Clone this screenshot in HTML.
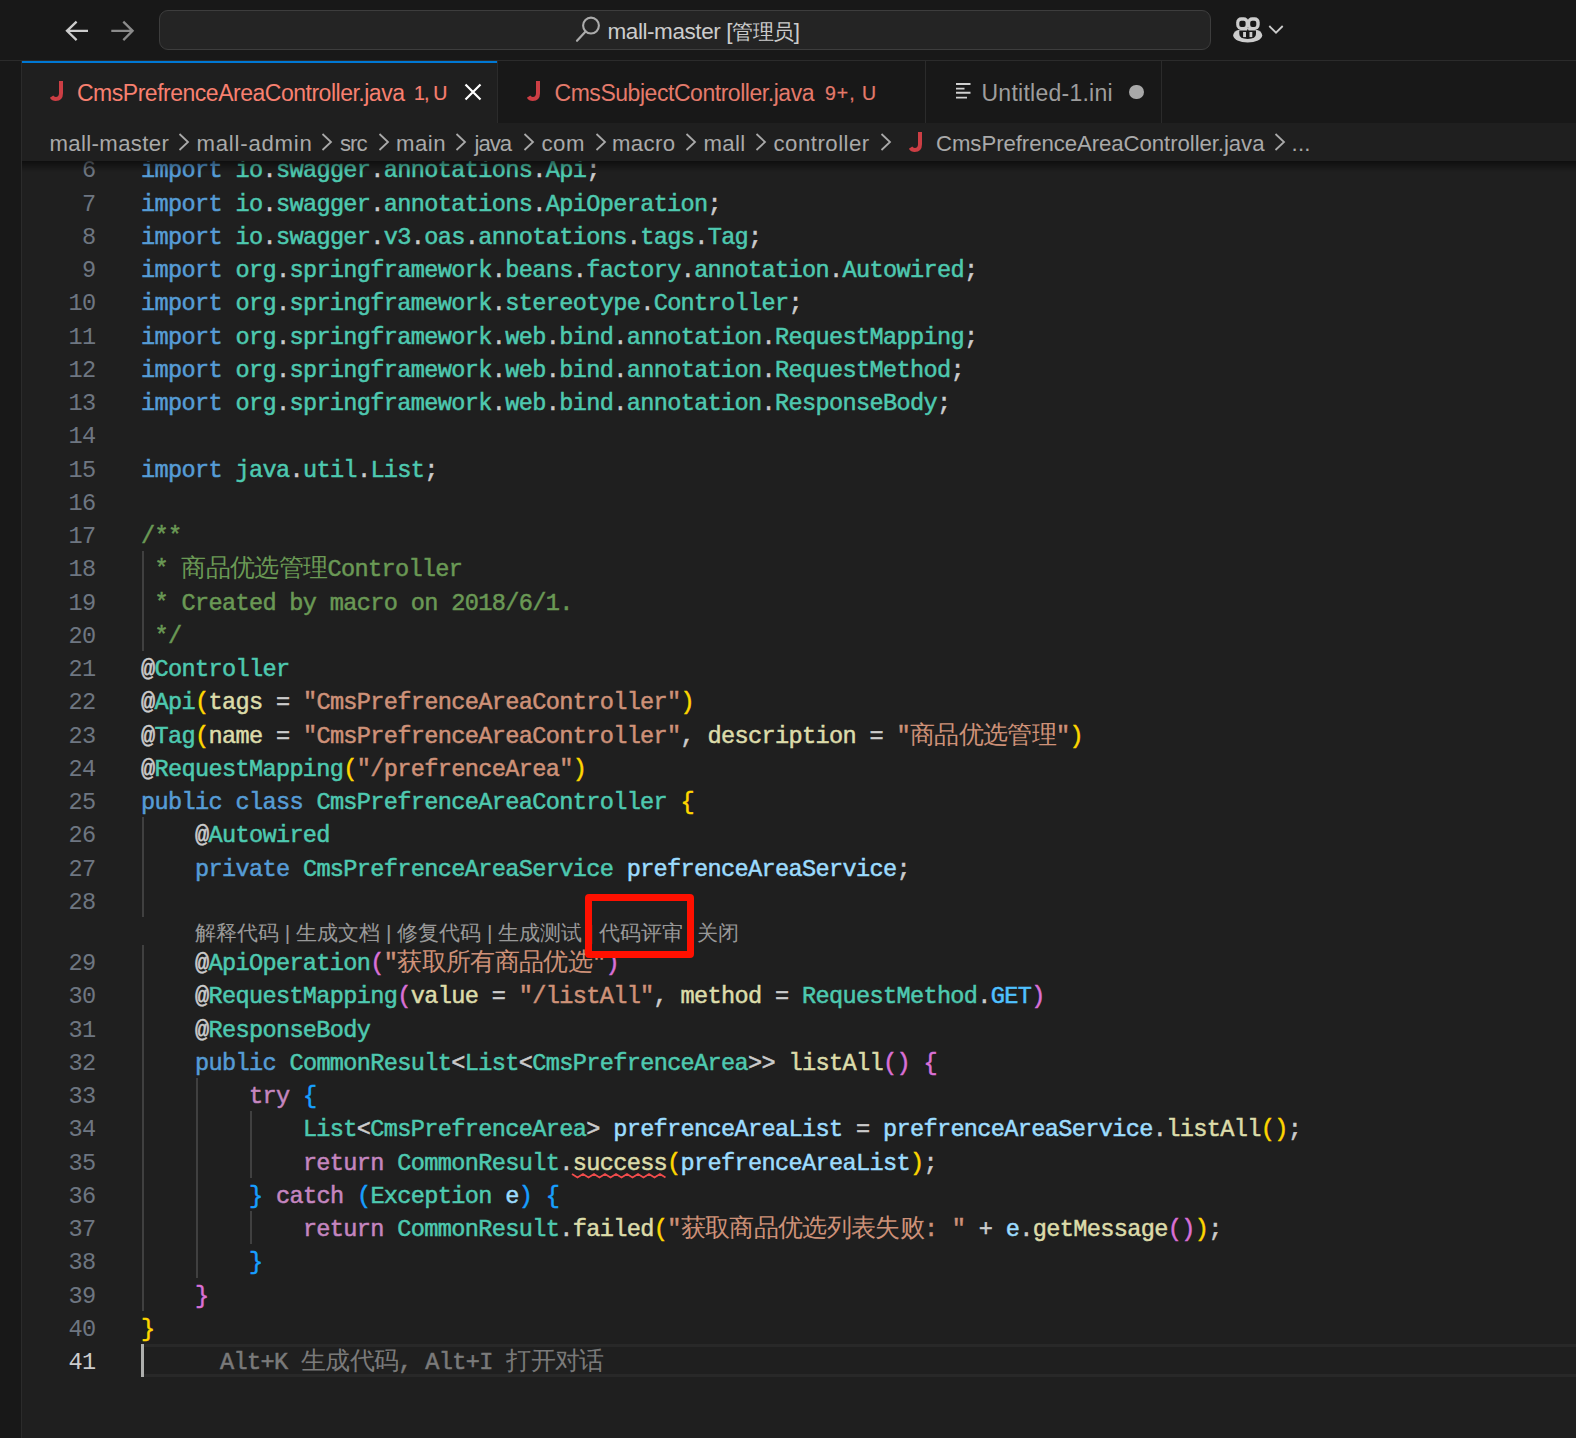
<!DOCTYPE html>
<html><head><meta charset="utf-8"><style>
*{margin:0;padding:0;box-sizing:border-box}
html,body{width:1576px;height:1438px;overflow:hidden;background:#1f1f1f;position:relative}
.abs{position:absolute}
.ui{font-family:"Liberation Sans",sans-serif;white-space:pre}
.titlebar{position:absolute;left:0;top:0;width:1576px;height:61px;background:#181818;border-bottom:1px solid #2b2b2b}
.search{position:absolute;left:159px;top:10px;width:1052px;height:40px;border-radius:9px;background:#242424;border:1.5px solid #3d3d3d}
.leftstrip{position:absolute;left:0;top:61px;width:22px;height:1377px;background:#181818;border-right:1px solid #2b2b2b}
.tabbar{position:absolute;left:22px;top:61px;width:1554px;height:62px;background:#181818}
.tab{position:absolute;top:61px;height:62px;border-right:1px solid #2b2b2b}
.tabtop{position:absolute;left:0;top:0;right:0;height:2px;background:#0078d4}
.tl{top:81px;font-size:22.2px;letter-spacing:-0.25px}
.jic{position:absolute;font-family:"Liberation Sans",sans-serif;font-weight:bold;color:#cc3e44;font-size:25px;transform:scaleX(0.9)}
.cjui{font-size:21px}
.bcbar{position:absolute;left:22px;top:123px;width:1554px;height:38px;background:#1f1f1f;z-index:2}
[id^=bc]{z-index:3} .bcz{z-index:3} .shadow{z-index:3}
.bc{top:130px;font-size:22.2px;color:#a9a9a9;letter-spacing:-0.2px}
.shadow{position:absolute;left:22px;top:161px;width:1554px;height:11px;background:linear-gradient(#00000088,#00000000)}
.ln{position:absolute;left:39.5px;width:57px;text-align:right;font-family:"Liberation Mono",monospace;font-size:23.6px;letter-spacing:-0.67px;line-height:33.25px;height:33.25px;color:#6e7681;transform:translate(-1px,2.1px)}
.ln.act{color:#cccccc}
.cl{position:absolute;left:142px;font-family:"Liberation Mono",monospace;font-size:23.6px;letter-spacing:-0.67px;line-height:33.25px;height:33.25px;white-space:pre;color:#cccccc;transform:translate(-1px,2.1px);-webkit-text-stroke:0.5px currentColor}
.k{color:#569cd6} .ty{color:#4ec9b0} .p{color:#cccccc} .cm{color:#6a9955} .cmc{color:#6a9955;font-size:24.92px;line-height:0;-webkit-text-stroke:0}
.s{color:#ce9178} .sc{color:#ce9178;font-size:24.92px;line-height:0;-webkit-text-stroke:0}
.colon{color:#ce9178;margin-right:14.4px} .fn{color:#dcdcaa} .v{color:#9cdcfe} .ct{color:#c586c0} .en{color:#4fc1ff}
.b1{color:#ffd700} .b2{color:#da70d6} .b3{color:#179fff}
.ig{position:absolute;width:1.75px;background:#404040}
.lhl{position:absolute;left:144px;width:1432px;height:33.25px;border-top:3.5px solid #282828;border-bottom:3.5px solid #282828}
.cursor{position:absolute;left:141px;width:3px;height:33.25px;background:#aeafad}
.ghost{color:#7a7a7a} .gc{font-size:24.92px;line-height:0;-webkit-text-stroke:0}
.codelens{position:absolute;left:195px;height:28px;line-height:28px;font-family:"Liberation Sans",sans-serif;font-size:21px;color:#999999;white-space:pre;letter-spacing:0px}
.redbox{position:absolute;left:585px;top:894.3px;width:108.6px;height:64px;border:7.3px solid #ff1000;border-radius:4px}
</style></head><body>
<div class="titlebar"></div>
<svg class="abs" style="left:62px;top:18px" width="30" height="26" viewBox="0 0 30 26"><path d="M14.6 3.6 L5 12.85 L14.6 22.1 M5.5 12.85 H26" fill="none" stroke="#cccccc" stroke-width="2.3"/></svg>
<svg class="abs" style="left:108px;top:18px" width="30" height="26" viewBox="0 0 30 26"><path d="M15.3 3.6 L24.6 12.85 L15.3 22.1 M24 12.85 H3.3" fill="none" stroke="#8b8b8b" stroke-width="2.3"/></svg>
<div class="search"></div>
<svg class="abs" style="left:574px;top:15px" width="28" height="28" viewBox="0 0 28 28"><circle cx="17" cy="10.55" r="7.9" fill="none" stroke="#ababab" stroke-width="2.1"/><path d="M11.6 16.4 L3 25.8" stroke="#ababab" stroke-width="2.2" stroke-linecap="round"/></svg>
<svg class="abs" style="left:1231px;top:15px" width="34" height="30" viewBox="0 0 34 30"><ellipse cx="16.7" cy="20.3" rx="14.5" ry="7.2" fill="#cccccc"/><rect x="5.2" y="2.3" width="12.5" height="12.5" rx="5" fill="#cccccc"/><rect x="16.2" y="2.3" width="12.5" height="12.5" rx="5" fill="#cccccc"/><rect x="8.3" y="5.7" width="6.3" height="6.2" rx="2" fill="#181818"/><rect x="19.2" y="5.7" width="6.1" height="6.2" rx="2" fill="#181818"/><path d="M8.3 15.4 H16 L16.8 13.8 L17.6 15.4 H25 V19 Q25 23.9 16.7 23.9 Q8.3 23.9 8.3 19 Z" fill="#181818"/><rect x="12.1" y="17" width="2.9" height="5.1" fill="#cccccc"/><rect x="18.5" y="17" width="2.8" height="5.1" fill="#cccccc"/></svg>
<svg class="abs" style="left:1267px;top:23px" width="18" height="12" viewBox="0 0 18 12"><path d="M2.3 3 L9 9.7 L15.7 3" fill="none" stroke="#cccccc" stroke-width="1.8"/></svg>

<div class="leftstrip"></div>
<div class="tabbar"></div>
<div class="tab" style="left:22px;width:476px;background:#1f1f1f"><div class="tabtop"></div></div>
<div class="tab" style="left:498px;width:428px"></div>
<div class="tab" style="left:926px;width:236px"></div>
<svg class="abs" style="left:44px;top:76px" width="30" height="30" viewBox="0 0 30 30"><path d="M17 5 V17.3 Q17 22.9 11.7 22.9 Q9 22.9 7.6 20.6" fill="none" stroke="#cc3e44" stroke-width="4"/></svg>
<svg class="abs" style="left:463px;top:82px" width="20" height="20" viewBox="0 0 20 20"><path d="M2.5 2.5 L17.5 17.5 M17.5 2.5 L2.5 17.5" stroke="#ffffff" stroke-width="2.2"/></svg>
<svg class="abs" style="left:520.6px;top:76px" width="30" height="30" viewBox="0 0 30 30"><path d="M17 5 V17.3 Q17 22.9 11.7 22.9 Q9 22.9 7.6 20.6" fill="none" stroke="#cc3e44" stroke-width="4"/></svg>
<svg class="abs" style="left:955px;top:82px" width="18" height="20" viewBox="0 0 18 20"><path d="M1 2 H15.5 M1 6.6 H9.5 M1 10.8 H15.5 M1 15.6 H12" stroke="#d0d0d0" stroke-width="1.9"/></svg>
<div class="abs" style="left:1129.3px;top:85px;width:14.3px;height:14.3px;border-radius:50%;background:#a8a8a8"></div>

<div class="bcbar"></div><svg class="abs bcz" style="left:178px;top:132px" width="12" height="20" viewBox="0 0 12 20"><path d="M1.5 2 L10 10 L1.5 18" fill="none" stroke="#a9a9a9" stroke-width="1.8"/></svg><svg class="abs bcz" style="left:321px;top:132px" width="12" height="20" viewBox="0 0 12 20"><path d="M1.5 2 L10 10 L1.5 18" fill="none" stroke="#a9a9a9" stroke-width="1.8"/></svg><svg class="abs bcz" style="left:378px;top:132px" width="12" height="20" viewBox="0 0 12 20"><path d="M1.5 2 L10 10 L1.5 18" fill="none" stroke="#a9a9a9" stroke-width="1.8"/></svg><svg class="abs bcz" style="left:455px;top:132px" width="12" height="20" viewBox="0 0 12 20"><path d="M1.5 2 L10 10 L1.5 18" fill="none" stroke="#a9a9a9" stroke-width="1.8"/></svg><svg class="abs bcz" style="left:523px;top:132px" width="12" height="20" viewBox="0 0 12 20"><path d="M1.5 2 L10 10 L1.5 18" fill="none" stroke="#a9a9a9" stroke-width="1.8"/></svg><svg class="abs bcz" style="left:594.5px;top:132px" width="12" height="20" viewBox="0 0 12 20"><path d="M1.5 2 L10 10 L1.5 18" fill="none" stroke="#a9a9a9" stroke-width="1.8"/></svg><svg class="abs bcz" style="left:684.5px;top:132px" width="12" height="20" viewBox="0 0 12 20"><path d="M1.5 2 L10 10 L1.5 18" fill="none" stroke="#a9a9a9" stroke-width="1.8"/></svg><svg class="abs bcz" style="left:754.5px;top:132px" width="12" height="20" viewBox="0 0 12 20"><path d="M1.5 2 L10 10 L1.5 18" fill="none" stroke="#a9a9a9" stroke-width="1.8"/></svg><svg class="abs bcz" style="left:879.5px;top:132px" width="12" height="20" viewBox="0 0 12 20"><path d="M1.5 2 L10 10 L1.5 18" fill="none" stroke="#a9a9a9" stroke-width="1.8"/></svg><svg class="abs bcz" style="left:902.6px;top:127px" width="30" height="30" viewBox="0 0 30 30"><path d="M17 5 V17.3 Q17 22.9 11.7 22.9 Q9 22.9 7.6 20.6" fill="none" stroke="#cc3e44" stroke-width="4"/></svg><svg class="abs bcz" style="left:1274px;top:132px" width="12" height="20" viewBox="0 0 12 20"><path d="M1.5 2 L10 10 L1.5 18" fill="none" stroke="#a9a9a9" stroke-width="1.8"/></svg>
<div class="ln" style="top:152.40px">6</div><div class="cl" style="top:152.40px"><span class="k">import</span><span class="p"> </span><span class="ty">io</span><span class="p">.</span><span class="ty">swagger</span><span class="p">.</span><span class="ty">annotations</span><span class="p">.</span><span class="ty">Api</span><span class="p">;</span></div><div class="ln" style="top:185.65px">7</div><div class="cl" style="top:185.65px"><span class="k">import</span><span class="p"> </span><span class="ty">io</span><span class="p">.</span><span class="ty">swagger</span><span class="p">.</span><span class="ty">annotations</span><span class="p">.</span><span class="ty">ApiOperation</span><span class="p">;</span></div><div class="ln" style="top:218.90px">8</div><div class="cl" style="top:218.90px"><span class="k">import</span><span class="p"> </span><span class="ty">io</span><span class="p">.</span><span class="ty">swagger</span><span class="p">.</span><span class="ty">v3</span><span class="p">.</span><span class="ty">oas</span><span class="p">.</span><span class="ty">annotations</span><span class="p">.</span><span class="ty">tags</span><span class="p">.</span><span class="ty">Tag</span><span class="p">;</span></div><div class="ln" style="top:252.15px">9</div><div class="cl" style="top:252.15px"><span class="k">import</span><span class="p"> </span><span class="ty">org</span><span class="p">.</span><span class="ty">springframework</span><span class="p">.</span><span class="ty">beans</span><span class="p">.</span><span class="ty">factory</span><span class="p">.</span><span class="ty">annotation</span><span class="p">.</span><span class="ty">Autowired</span><span class="p">;</span></div><div class="ln" style="top:285.40px">10</div><div class="cl" style="top:285.40px"><span class="k">import</span><span class="p"> </span><span class="ty">org</span><span class="p">.</span><span class="ty">springframework</span><span class="p">.</span><span class="ty">stereotype</span><span class="p">.</span><span class="ty">Controller</span><span class="p">;</span></div><div class="ln" style="top:318.65px">11</div><div class="cl" style="top:318.65px"><span class="k">import</span><span class="p"> </span><span class="ty">org</span><span class="p">.</span><span class="ty">springframework</span><span class="p">.</span><span class="ty">web</span><span class="p">.</span><span class="ty">bind</span><span class="p">.</span><span class="ty">annotation</span><span class="p">.</span><span class="ty">RequestMapping</span><span class="p">;</span></div><div class="ln" style="top:351.90px">12</div><div class="cl" style="top:351.90px"><span class="k">import</span><span class="p"> </span><span class="ty">org</span><span class="p">.</span><span class="ty">springframework</span><span class="p">.</span><span class="ty">web</span><span class="p">.</span><span class="ty">bind</span><span class="p">.</span><span class="ty">annotation</span><span class="p">.</span><span class="ty">RequestMethod</span><span class="p">;</span></div><div class="ln" style="top:385.15px">13</div><div class="cl" style="top:385.15px"><span class="k">import</span><span class="p"> </span><span class="ty">org</span><span class="p">.</span><span class="ty">springframework</span><span class="p">.</span><span class="ty">web</span><span class="p">.</span><span class="ty">bind</span><span class="p">.</span><span class="ty">annotation</span><span class="p">.</span><span class="ty">ResponseBody</span><span class="p">;</span></div><div class="ln" style="top:418.40px">14</div><div class="ln" style="top:451.65px">15</div><div class="cl" style="top:451.65px"><span class="k">import</span><span class="p"> </span><span class="ty">java</span><span class="p">.</span><span class="ty">util</span><span class="p">.</span><span class="ty">List</span><span class="p">;</span></div><div class="ln" style="top:484.90px">16</div><div class="ln" style="top:518.15px">17</div><div class="cl" style="top:518.15px"><span class="cm">/**</span></div><div class="ln" style="top:551.40px">18</div><div class="cl" style="top:551.40px"><span class="cm"> * </span><span class="cmc">商品优选管理</span><span class="cm">Controller</span></div><div class="ln" style="top:584.65px">19</div><div class="cl" style="top:584.65px"><span class="cm"> * Created by macro on 2018/6/1.</span></div><div class="ln" style="top:617.90px">20</div><div class="cl" style="top:617.90px"><span class="cm"> */</span></div><div class="ln" style="top:651.15px">21</div><div class="cl" style="top:651.15px"><span class="p">@</span><span class="ty">Controller</span></div><div class="ln" style="top:684.40px">22</div><div class="cl" style="top:684.40px"><span class="p">@</span><span class="ty">Api</span><span class="b1">(</span><span class="fn">tags</span><span class="p"> = </span><span class="s">&quot;CmsPrefrenceAreaController&quot;</span><span class="b1">)</span></div><div class="ln" style="top:717.65px">23</div><div class="cl" style="top:717.65px"><span class="p">@</span><span class="ty">Tag</span><span class="b1">(</span><span class="fn">name</span><span class="p"> = </span><span class="s">&quot;CmsPrefrenceAreaController&quot;</span><span class="p">, </span><span class="fn">description</span><span class="p"> = </span><span class="s">&quot;</span><span class="sc">商品优选管理</span><span class="s">&quot;</span><span class="b1">)</span></div><div class="ln" style="top:750.90px">24</div><div class="cl" style="top:750.90px"><span class="p">@</span><span class="ty">RequestMapping</span><span class="b1">(</span><span class="s">&quot;/prefrenceArea&quot;</span><span class="b1">)</span></div><div class="ln" style="top:784.15px">25</div><div class="cl" style="top:784.15px"><span class="k">public</span><span class="p"> </span><span class="k">class</span><span class="p"> </span><span class="ty">CmsPrefrenceAreaController</span><span class="p"> </span><span class="b1">{</span></div><div class="ln" style="top:817.40px">26</div><div class="cl" style="top:817.40px"><span class="p">    @</span><span class="ty">Autowired</span></div><div class="ln" style="top:850.65px">27</div><div class="cl" style="top:850.65px"><span class="p">    </span><span class="k">private</span><span class="p"> </span><span class="ty">CmsPrefrenceAreaService</span><span class="p"> </span><span class="v">prefrenceAreaService</span><span class="p">;</span></div><div class="ln" style="top:883.90px">28</div><div class="ln" style="top:945.20px">29</div><div class="cl" style="top:945.20px"><span class="p">    @</span><span class="ty">ApiOperation</span><span class="b2">(</span><span class="s">&quot;</span><span class="sc">获取所有商品优选</span><span class="s">&quot;</span><span class="b2">)</span></div><div class="ln" style="top:978.45px">30</div><div class="cl" style="top:978.45px"><span class="p">    @</span><span class="ty">RequestMapping</span><span class="b2">(</span><span class="fn">value</span><span class="p"> = </span><span class="s">&quot;/listAll&quot;</span><span class="p">, </span><span class="fn">method</span><span class="p"> = </span><span class="ty">RequestMethod</span><span class="p">.</span><span class="en">GET</span><span class="b2">)</span></div><div class="ln" style="top:1011.70px">31</div><div class="cl" style="top:1011.70px"><span class="p">    @</span><span class="ty">ResponseBody</span></div><div class="ln" style="top:1044.95px">32</div><div class="cl" style="top:1044.95px"><span class="p">    </span><span class="k">public</span><span class="p"> </span><span class="ty">CommonResult</span><span class="p">&lt;</span><span class="ty">List</span><span class="p">&lt;</span><span class="ty">CmsPrefrenceArea</span><span class="p">&gt;&gt; </span><span class="fn">listAll</span><span class="b2">()</span><span class="p"> </span><span class="b2">{</span></div><div class="ln" style="top:1078.20px">33</div><div class="cl" style="top:1078.20px"><span class="p">        </span><span class="ct">try</span><span class="p"> </span><span class="b3">{</span></div><div class="ln" style="top:1111.45px">34</div><div class="cl" style="top:1111.45px"><span class="p">            </span><span class="ty">List</span><span class="p">&lt;</span><span class="ty">CmsPrefrenceArea</span><span class="p">&gt; </span><span class="v">prefrenceAreaList</span><span class="p"> = </span><span class="v">prefrenceAreaService</span><span class="p">.</span><span class="fn">listAll</span><span class="b1">()</span><span class="p">;</span></div><div class="ln" style="top:1144.70px">35</div><div class="cl" style="top:1144.70px"><span class="p">            </span><span class="ct">return</span><span class="p"> </span><span class="ty">CommonResult</span><span class="p">.</span><span class="fn sq">success</span><span class="b1">(</span><span class="v">prefrenceAreaList</span><span class="b1">)</span><span class="p">;</span></div><div class="ln" style="top:1177.95px">36</div><div class="cl" style="top:1177.95px"><span class="p">        </span><span class="b3">}</span><span class="p"> </span><span class="ct">catch</span><span class="p"> </span><span class="b3">(</span><span class="ty">Exception</span><span class="p"> </span><span class="v">e</span><span class="b3">)</span><span class="p"> </span><span class="b3">{</span></div><div class="ln" style="top:1211.20px">37</div><div class="cl" style="top:1211.20px"><span class="p">            </span><span class="ct">return</span><span class="p"> </span><span class="ty">CommonResult</span><span class="p">.</span><span class="fn">failed</span><span class="b1">(</span><span class="s">&quot;</span><span class="sc">获取商品优选列表失败</span><span class="colon">:</span><span class="s">&quot;</span><span class="p"> + </span><span class="v">e</span><span class="p">.</span><span class="fn">getMessage</span><span class="b2">()</span><span class="b1">)</span><span class="p">;</span></div><div class="ln" style="top:1244.45px">38</div><div class="cl" style="top:1244.45px"><span class="p">        </span><span class="b3">}</span></div><div class="ln" style="top:1277.70px">39</div><div class="cl" style="top:1277.70px"><span class="p">    </span><span class="b2">}</span></div><div class="ln" style="top:1310.95px">40</div><div class="cl" style="top:1310.95px"><span class="b1">}</span></div><div class="ln act" style="top:1344.20px">41</div>
<div class="ig" style="left:142.00px;top:551.40px;height:99.75px"></div><div class="ig" style="left:142.00px;top:817.40px;height:99.75px"></div><div class="ig" style="left:142.00px;top:945.20px;height:365.75px"></div><div class="ig" style="left:195.96px;top:1078.20px;height:199.50px"></div><div class="ig" style="left:249.92px;top:1111.45px;height:66.50px"></div><div class="ig" style="left:249.92px;top:1211.20px;height:33.25px"></div>
<div class="lhl" style="top:1344.20px"></div>
<div class="cursor" style="top:1344.20px"></div>
<div class="cl ghost" style="top:1344.20px;left:221px">Alt+K <span class="gc">生成代码</span>, Alt+I <span class="gc">打开对话</span></div>
<div class="codelens" style="top:919.15px">解释代码 | 生成文档 | 修复代码 | 生成测试 | 代码评审 | <span style="margin-left:-4px">关闭</span></div>
<svg class="abs" style="left:571px;top:1171px" width="98" height="9" viewBox="0 0 98 9"><path d="M1 3 L6.50 6.5 L12.00 3 L17.50 6.5 L23.00 3 L28.50 6.5 L34.00 3 L39.50 6.5 L45.00 3 L50.50 6.5 L56.00 3 L61.50 6.5 L67.00 3 L72.50 6.5 L78.00 3 L83.50 6.5 L89.00 3 L94.50 6.5" fill="none" stroke="#f14c4c" stroke-width="1.8" stroke-linejoin="miter"/></svg>
<div class="redbox"></div>
<div class="shadow"></div>
<div class="abs ui" id="search" style="left:607.50px;top:18.00px;font-size:22.5px;color:#cccccc;letter-spacing:-0.425px">mall-master [<span class="cjui">管理员</span>]</div><div class="abs ui" id="tab1" style="left:77.00px;top:80.20px;font-size:23px;color:#f88070;letter-spacing:-0.487px">CmsPrefrenceAreaController.java</div><div class="abs ui" id="tab1b" style="left:414.00px;top:81.70px;font-size:19.5px;color:#f88070;letter-spacing:-0.833px"><span style="-webkit-text-stroke:0.2px #f88070">1, U</span></div><div class="abs ui" id="tab2" style="left:554.50px;top:80.20px;font-size:23px;color:#e47a6b;letter-spacing:-0.458px">CmsSubjectController.java</div><div class="abs ui" id="tab2b" style="left:825.00px;top:81.70px;font-size:19.5px;color:#e47a6b;letter-spacing:1.000px"><span style="-webkit-text-stroke:0.2px #e47a6b">9+, U</span></div><div class="abs ui" id="tab3" style="left:981.50px;top:80.20px;font-size:23px;color:#9d9d9d;letter-spacing:0.254px">Untitled-1.ini</div><div class="abs ui" id="bc1" style="left:49.50px;top:131.00px;font-size:22.2px;color:#a9a9a9;letter-spacing:0.350px">mall-master</div><div class="abs ui" id="bc2" style="left:196.50px;top:131.00px;font-size:22.2px;color:#a9a9a9;letter-spacing:0.767px">mall-admin</div><div class="abs ui" id="bc3" style="left:340.00px;top:131.00px;font-size:22.2px;color:#a9a9a9;letter-spacing:-1.000px">src</div><div class="abs ui" id="bc4" style="left:396.00px;top:131.00px;font-size:22.2px;color:#a9a9a9;letter-spacing:0.500px">main</div><div class="abs ui" id="bc5" style="left:474.50px;top:131.00px;font-size:22.2px;color:#a9a9a9;letter-spacing:-1.000px">java</div><div class="abs ui" id="bc6" style="left:541.50px;top:131.00px;font-size:22.2px;color:#a9a9a9;letter-spacing:0.500px">com</div><div class="abs ui" id="bc7" style="left:612.00px;top:131.00px;font-size:22.2px;color:#a9a9a9;letter-spacing:0.375px">macro</div><div class="abs ui" id="bc8" style="left:703.50px;top:131.00px;font-size:22.2px;color:#a9a9a9;letter-spacing:0.333px">mall</div><div class="abs ui" id="bc9" style="left:773.50px;top:131.00px;font-size:22.2px;color:#a9a9a9;letter-spacing:0.500px">controller</div><div class="abs ui" id="bc10" style="left:936.00px;top:131.00px;font-size:22.2px;color:#a9a9a9;letter-spacing:-0.067px">CmsPrefrenceAreaController.java</div><div class="abs ui" id="bc11" style="left:1291.50px;top:131.00px;font-size:22.2px;color:#a9a9a9;letter-spacing:0.250px">...</div></body></html>
